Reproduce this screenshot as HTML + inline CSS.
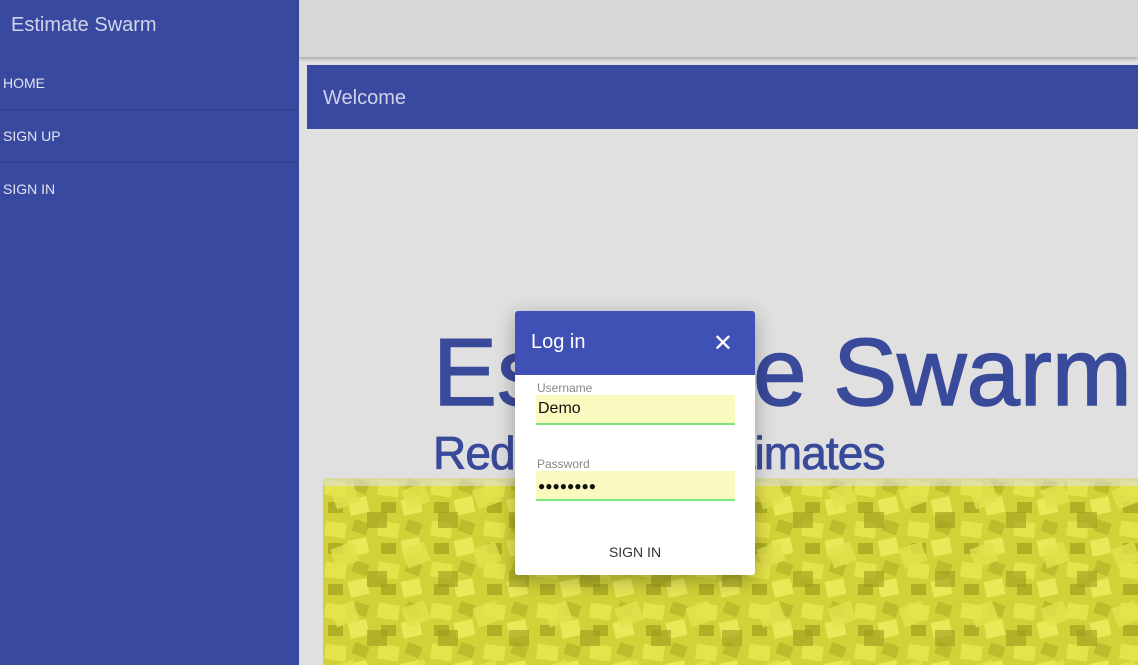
<!DOCTYPE html>
<html><head><style>
*{margin:0;padding:0;box-sizing:border-box}
html,body{width:1138px;height:665px;overflow:hidden}
body{background:#e0e0e0;font-family:"Liberation Sans",sans-serif;position:relative}
.side{position:absolute;left:0;top:0;width:299px;height:665px;background:#3949a0}
.side .t{position:absolute;left:11px;top:14px;font-size:20px;color:#d0d4ea}
.side .i{position:absolute;left:3px;font-size:14px;color:#e0e3f0}
.side .l{position:absolute;left:0;width:299px;height:1px;background:#2e3c88}
.top{position:absolute;left:299px;top:0;width:839px;height:57px;background:#d7d7d7;box-shadow:0 2px 3px rgba(0,0,0,.25)}
.wel{position:absolute;left:307px;top:65px;width:831px;height:64px;background:#3949a0;color:#cfd3ea;font-size:20px;padding:22px 16px}
.big{position:absolute;left:433px;top:318px;font-size:96px;color:#3a4a9a;white-space:nowrap;-webkit-text-stroke:1.5px #3a4a9a}
.sub{position:absolute;left:433px;top:426px;font-size:46px;color:#3a4a9a;white-space:nowrap;letter-spacing:-0.9px;-webkit-text-stroke:.8px #3a4a9a}
.cubes{position:absolute;left:323px;top:478px;width:815px;height:187px}
.dlg{position:absolute;left:515px;top:311px;width:240px;height:264px;background:#fff;border-radius:3px;box-shadow:0 5px 20px rgba(0,0,0,.3);overflow:hidden}
.dh{height:64px;background:#3f51b5;color:#fff;font-size:20px;padding:20px 16px}
.lab{position:absolute;left:22px;font-size:12px;color:#888}
.inp{position:absolute;left:21px;width:199px;height:30px;background:#fafac0;border-bottom:2px solid #7ce87c;font-size:16px;padding:5px 2px;color:#111}
.btn{position:absolute;left:0;width:240px;text-align:center;top:233px;font-size:14px;color:#333}
</style></head><body>
<div class="side">
<div class="t">Estimate Swarm</div>
<div class="i" style="top:75px">HOME</div><div class="l" style="top:109px"></div>
<div class="i" style="top:128px">SIGN UP</div><div class="l" style="top:162px"></div>
<div class="i" style="top:181px">SIGN IN</div>
</div>
<div class="top"></div>
<div class="wel">Welcome</div>
<div class="big">Estimate Swarm</div>
<div class="sub">Reduce your estimates</div>
<div class="cubes">
<svg width="815" height="187">
<defs>
<pattern id="p" width="53" height="41" patternUnits="userSpaceOnUse">
<rect width="53" height="41" fill="#d2d238"/>
<rect x="2" y="3" width="21" height="15" fill="#e4e44a" transform="rotate(8 12 10)"/>
<rect x="26" y="20" width="19" height="16" fill="#e8e858" transform="rotate(-12 35 28)"/>
<rect x="5" y="24" width="15" height="11" fill="#b0b026"/>
<rect x="30" y="2" width="15" height="12" fill="#bcbc2c" transform="rotate(20 37 8)"/>
</pattern>
<pattern id="q" width="71" height="59" patternUnits="userSpaceOnUse">
<rect x="10" y="8" width="24" height="20" fill="#e2e24e" opacity=".8" transform="rotate(-20 22 18)"/>
<rect x="44" y="34" width="20" height="16" fill="#9c9c1e" opacity=".6"/>
</pattern>
</defs>
<rect width="815" height="187" fill="url(#p)"/>
<rect width="815" height="187" fill="url(#q)"/>
<rect width="815" height="8" fill="#e0e0e0" opacity=".6"/>
</svg>
</div>
<div class="dlg">
<div class="dh">Log in<span style="position:absolute;right:22px;top:18px;font-size:24px">✕</span></div>
<div class="lab" style="top:70px">Username</div>
<div class="inp" style="top:84px">Demo</div>
<div class="lab" style="top:146px">Password</div>
<div class="inp" style="top:160px;font-size:12px;padding-top:8px">●●●●●●●●</div>
<div class="btn">SIGN IN</div>
</div>
</body></html>
